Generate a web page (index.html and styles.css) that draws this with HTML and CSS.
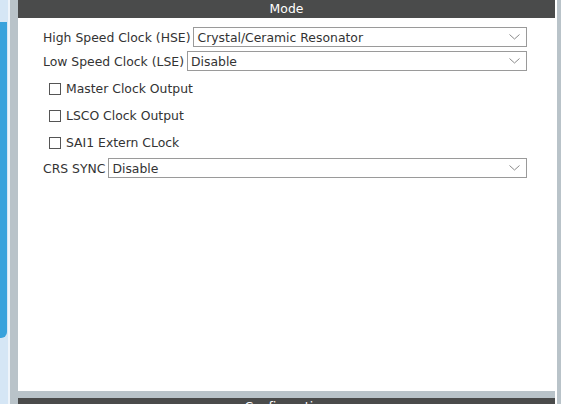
FILE: index.html
```html
<!DOCTYPE html>
<html lang="en">

<head>
  <meta charset="utf-8" />
  <meta name="viewport" content="width=device-width, initial-scale=1.0">
  <title>RCC Mode</title>
  <link rel="stylesheet" href="styles.css">
</head>

<body>

  <div class="app">
    <!-- left tree strip -->
    <div class="side">
      <div class="side-bar"></div>
    </div>
    <div class="gutter"></div>

    <div class="center">
      <section class="panel">
        <header class="panel-head">Mode</header>
        <div class="panel-body">
          <div class="field">
            <label>High Speed Clock (HSE)</label>
            <div class="select">
              <span>Crystal/Ceramic Resonator</span>
              <svg class="chev" width="11" height="6" viewBox="0 0 11 6"><path d="M0.5 0.5 L5.5 5 L10.5 0.5" fill="none" stroke="#8a8a8a" stroke-width="1"/></svg>
            </div>
          </div>
          <div class="field">
            <label>Low Speed Clock (LSE)</label>
            <div class="select">
              <span>Disable</span>
              <svg class="chev" width="11" height="6" viewBox="0 0 11 6"><path d="M0.5 0.5 L5.5 5 L10.5 0.5" fill="none" stroke="#8a8a8a" stroke-width="1"/></svg>
            </div>
          </div>

          <div class="check"><span class="box"></span>Master Clock Output</div>
          <div class="check"><span class="box"></span>LSCO Clock Output</div>
          <div class="check"><span class="box"></span>SAI1 Extern CLock</div>

          <div class="field crs">
            <label>CRS SYNC</label>
            <div class="select">
              <span>Disable</span>
              <svg class="chev" width="11" height="6" viewBox="0 0 11 6"><path d="M0.5 0.5 L5.5 5 L10.5 0.5" fill="none" stroke="#8a8a8a" stroke-width="1"/></svg>
            </div>
          </div>
        </div>
      </section>

      <div class="split"></div>

      <section class="panel-next">
        <header class="panel-head">Configuration</header>
      </section>
    </div>

    <div class="scroll"></div>
  </div>

</body>

</html>
```

FILE: styles.css
```css
body {
  margin: 0;
  padding: 0;
  font-family: "DejaVu Sans", Verdana, sans-serif;
  font-size: 12.4px;
  color: #333;
  background-color: #fff;
}

.app {
  display: flex;
  width: 561px;
  height: 404px;
  overflow: hidden;
}

.side {
  width: 8px;
  background-color: #d5e6f5;
  border-right: 2px solid #eef4fa;
  padding-top: 22px;
  box-sizing: content-box;
}

.side-bar {
  width: 7px;
  height: 316px;
  background-color: #38a2dc;
  border-bottom-right-radius: 6px;
}

.gutter {
  width: 8px;
  background-color: #b9c3c9;
}

.center {
  flex: 1;
  display: flex;
  flex-direction: column;
}

.panel {
  height: 391px;
  flex-shrink: 0;
  display: flex;
  flex-direction: column;
  background-color: #fff;
}

.panel-head {
  height: 18px;
  line-height: 18px;
  background-color: #4a4b4b;
  color: #fff;
  text-align: center;
  font-size: 12.4px;
  flex-shrink: 0;
}

.panel-body {
  padding: 9px 28px 0 25px;
}

.field {
  display: flex;
  align-items: center;
  height: 20px;
  margin-bottom: 4px;
}

.field label {
  white-space: nowrap;
  margin-right: 3px;
}

.select {
  flex: 1;
  height: 18px;
  border: 1px solid #9a9a9a;
  display: flex;
  align-items: center;
  justify-content: space-between;
  padding: 0 6px 0 3px;
}

.chev {
  display: block;
}

.check {
  display: flex;
  align-items: center;
  height: 27px;
  padding-left: 6px;
}

.check .box {
  width: 10px;
  height: 10px;
  border: 1px solid #555;
  margin-right: 5px;
}

.field.crs {
  margin-top: 2px;
}

.split {
  height: 7px;
  flex-shrink: 0;
  background-color: #b9c3c9;
}

.panel-next {
  flex: 1;
  min-height: 0;
  overflow: hidden;
}

.scroll {
  width: 4px;
  margin-left: 2px;
  background-color: #b9c3c9;
}
```
